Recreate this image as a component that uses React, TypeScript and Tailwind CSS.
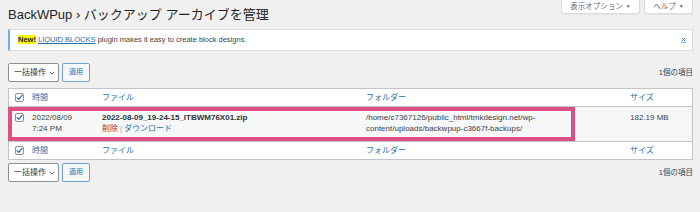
import React from 'react';

const Check: React.FC = () => (
  <span className="w-[9px] h-[9px] rounded-[2px] border border-[#8c8f94] bg-white flex items-center justify-center">
    <svg width="7" height="7" viewBox="0 0 10 10">
      <path d="M1.5 5.2 L4 7.6 L8.6 1.8" fill="none" stroke="#2271b1" strokeWidth="1.7" strokeLinecap="round" strokeLinejoin="round" />
    </svg>
  </span>
);

const BulkBar: React.FC = () => (
  <div className="flex items-center justify-between h-[19px]">
    <div className="flex items-center gap-[3px] h-full">
      <div className="w-[51px] h-full border border-[#8c8f94] rounded-[2px] bg-white flex items-center pl-[5px] gap-[3px] text-[8px] text-[#2c3338]">
        <span>一括操作</span>
        <svg width="6" height="4" viewBox="0 0 8 5">
          <path d="M1 1 L4 4 L7 1" fill="none" stroke="#50575e" strokeWidth="1.3" />
        </svg>
      </div>
      <div className="w-[28px] h-full border border-[#6ea0cf] rounded-[2px] bg-[#f6f7f7] flex items-center justify-center text-[7px] text-[#2271b1]">
        適用
      </div>
    </div>
    <span className="text-[7.5px] text-[#3c434a]">1個の項目</span>
  </div>
);

const HeadRow: React.FC = () => (
  <div className="grid grid-cols-[23px_70px_264px_264px_1fr] h-[17px] items-center text-[8px] text-[#2271b1]">
    <span className="pl-[6px]"><Check /></span>
    <span>時間</span>
    <span>ファイル</span>
    <span>フォルダー</span>
    <span>サイズ</span>
  </div>
);

export default function App() {
  return (
    <div className="w-[700px] h-[212px] overflow-hidden bg-[#f0f0f1] pl-2 pr-[7px] font-['Liberation_Sans','Noto_Sans_CJK_JP',sans-serif]">
      {/* title + screen meta */}
      <div className="flex justify-between items-start">
        <h1 className="mt-[6px] text-[13px] leading-[18px] text-[#1d2327]">BackWPup › バックアップ アーカイブを管理</h1>
        <div className="flex gap-[4px]">
          <div className="w-[79px] h-[14px] bg-white border border-t-0 border-[#dcdcde] rounded-b-[3px] shadow-[0_1px_1px_rgba(0,0,0,0.05)] flex items-center justify-center gap-[3px] text-[7.5px] text-[#646970]">
            表示オプション <span className="text-[5px]">▼</span>
          </div>
          <div className="w-[49px] h-[14px] bg-white border border-t-0 border-[#dcdcde] rounded-b-[3px] shadow-[0_1px_1px_rgba(0,0,0,0.05)] flex items-center justify-center gap-[3px] text-[7.5px] text-[#646970]">
            ヘルプ <span className="text-[5px]">▼</span>
          </div>
        </div>
      </div>

      {/* notice */}
      <div className="mt-[5px] h-[22px] bg-white border border-[#dcdcde] border-l-2 border-l-[#72aee6] flex items-center justify-between pl-2 pr-[6px] text-[7.5px] text-[#3c434a]">
        <p>
          <span className="bg-[#f7f700] font-bold text-[#1d2327]">New!</span>{' '}
          <span className="text-[#2271b1] underline">LIQUID BLOCKS</span> plugin makes it easy to create block designs.
        </p>
        <svg width="5" height="6" viewBox="0 0 5 6">
          <path d="M0.8 0.8 L4.2 4.2 M4.2 0.8 L0.8 4.2" stroke="#2271b1" strokeWidth="0.9" />
          <path d="M0 5.6 H5" stroke="#2271b1" strokeWidth="0.6" />
        </svg>
      </div>

      <div className="mt-[12px]">
        <BulkBar />
      </div>

      {/* table */}
      <div className="mt-[6px] bg-white border border-[#c3c4c7]">
        <HeadRow />
        <div className="relative grid grid-cols-[23px_70px_264px_264px_1fr] h-[36px] bg-[#f6f7f7] border-t border-b border-[#c3c4c7] pt-[6px] text-[8px] leading-[10.5px] text-[#3c434a]">
          <span className="pl-[6px]"><Check /></span>
          <div>
            <div>2022/08/09</div>
            <div>7:24 PM</div>
          </div>
          <div>
            <div className="font-bold text-[#2c3338]">2022-08-09_19-24-15_ITBWM76X01.zip</div>
            <div>
              <span className="text-[#b32d2e]">削除</span>
              <span className="text-[#a7aaad] mx-[2px]">|</span>
              <span className="text-[#2271b1]">ダウンロード</span>
            </div>
          </div>
          <div>
            <div>/home/c7367126/public_html/tmkdesign.net/wp-</div>
            <div>content/uploads/backwpup-c3667f-backups/</div>
          </div>
          <div>182.19 MB</div>
          {/* highlight annotation */}
          <div className="absolute left-[-1px] top-0 w-[567px] h-[34px] border-4 border-[#dc4f82] pointer-events-none" />
        </div>
        <HeadRow />
      </div>

      <div className="mt-[3px]">
        <BulkBar />
      </div>
    </div>
  );
}
